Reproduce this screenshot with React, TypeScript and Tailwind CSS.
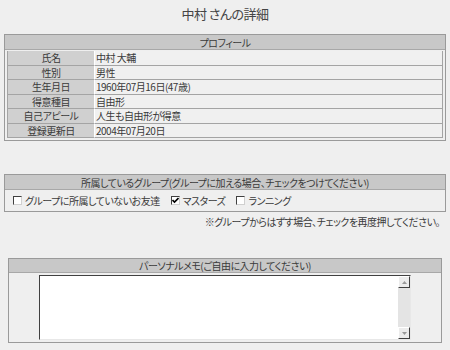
import React from 'react';

const font = "font-['MS_PGothic','Noto_Sans_CJK_JP',sans-serif] [font-feature-settings:'palt']";

const profile: [string, string][] = [
  ['氏名', '中村 大輔'],
  ['性別', '男性'],
  ['生年月日', '1960年07月16日(47歳)'],
  ['得意種目', '自由形'],
  ['自己アピール', '人生も自由形が得意'],
  ['登録更新日', '2004年07月20日'],
];

const Check = ({ checked }: { checked?: boolean }) => (
  <span className="inline-flex w-[9px] h-[9px] border border-t-[#404040] border-l-[#404040] border-b-[#d0d0d0] border-r-[#d0d0d0] bg-white items-center justify-center mr-[3px]">
    {checked && (
      <svg width="7" height="7" viewBox="0 0 7 7">
        <path d="M0.5 3 L2.5 5 L6.5 1" stroke="#000" strokeWidth="1.6" fill="none" />
      </svg>
    )}
  </span>
);

const App: React.FC = () => {
  return (
    <div className={`w-[450px] h-[350px] bg-[#efefef] text-[#3a3a3a] text-[10px] tracking-[-0.5px] overflow-hidden ${font}`}>
      <div className="h-[34px] flex items-center justify-center text-[13px] text-[#444] pb-[7px]">中村 さんの詳細</div>

      {/* Profile */}
      <div className="mx-[4px] w-[442px] border border-[#9a9a9a]">
        <div className="h-[15px] bg-[#c8c8c8] border-b border-[#a8a8a8] flex items-center justify-center">プロフィール</div>
        <div className="px-[2px] pt-[1px] pb-[2px]">
          {profile.map(([k, v]) => (
            <div key={k} className="flex h-[14.5px]">
              <div className="w-[87px] bg-[#d0d0d0] border-b border-l border-[#a4a4a4] flex items-center justify-center">{k}</div>
              <div className="flex-1 bg-[#f0f0f0] border border-t-0 border-[#a4a4a4] border-l-white flex items-center pl-[1px]">{v}</div>
            </div>
          ))}
        </div>
      </div>

      {/* Groups */}
      <div className="mt-[33px] mx-[4px] w-[442px] border border-[#9a9a9a]">
        <div className="h-[15px] bg-[#c8c8c8] border-b border-[#a8a8a8] flex items-center justify-center">所属しているグループ(グループに加える場合、チェックをつけてください)</div>
        <div className="h-[21px] flex items-center pl-[8px] gap-[11px]">
          <label className="flex items-center"><Check />グループに所属していないお友達</label>
          <label className="flex items-center"><Check checked />マスターズ</label>
          <label className="flex items-center"><Check />ランニング</label>
        </div>
      </div>
      <div className="mt-[2px] pr-[10px] text-right">※グループからはずす場合、チェックを再度押してください。</div>

      {/* Memo */}
      <div className="mt-[29px] mx-[8px] w-[434px] border border-[#9a9a9a]">
        <div className="h-[14px] bg-[#c8c8c8] border-b border-[#a8a8a8] flex items-center justify-center">パーソナルメモ(ご自由に入力してください)</div>
        <div className="h-[69px] pl-[30px] pt-[2px]">
          <div className="w-[372px] h-[65px] bg-white border border-t-[#404040] border-l-[#404040] border-b-[#e8e8e8] border-r-[#e8e8e8] flex">
            <div className="flex-1" />
            <div className="w-[12px] bg-[#e4e4e4] flex flex-col justify-between">
              <div className="h-[12px] bg-[#ececec] border border-t-white border-l-white border-b-[#404040] border-r-[#404040] flex items-center justify-center">
                <svg width="5" height="3" viewBox="0 0 5 3"><path d="M0 3 L2.5 0 L5 3 Z" fill="#999" /></svg>
              </div>
              <div className="h-[12px] bg-[#ececec] border border-t-white border-l-white border-b-[#404040] border-r-[#404040] flex items-center justify-center">
                <svg width="5" height="3" viewBox="0 0 5 3"><path d="M0 0 L2.5 3 L5 0 Z" fill="#999" /></svg>
              </div>
            </div>
          </div>
        </div>
      </div>
    </div>
  );
};

export default App;
